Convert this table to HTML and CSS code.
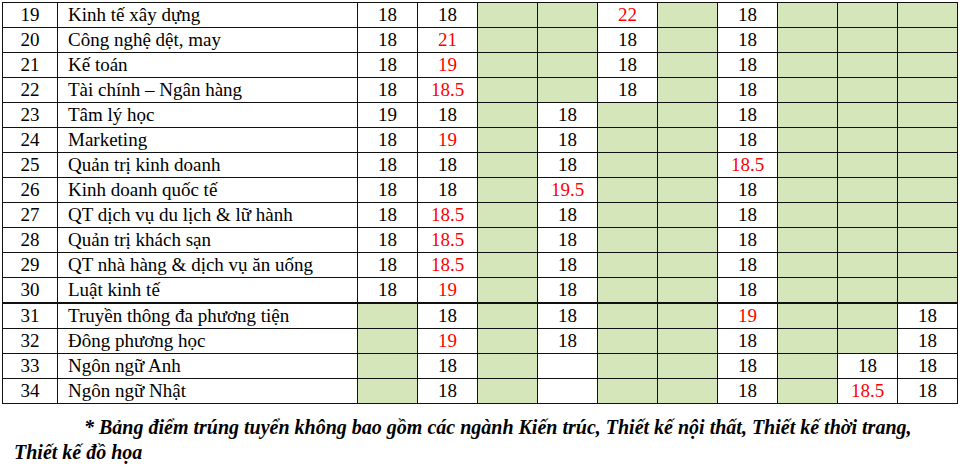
FILE: index.html
```html
<!DOCTYPE html>
<html lang="vi">
<head>
<meta charset="utf-8">
<link rel="stylesheet" href="styles.css">
</head>
<body>
<div class="page">
<table class="scores">
<colgroup>
<col class="c-idx"><col class="c-name">
<col class="c-n"><col class="c-n"><col class="c-n"><col class="c-n"><col class="c-n"><col class="c-n"><col class="c-n"><col class="c-n"><col class="c-n"><col class="c-n">
</colgroup>
<tbody>
<tr><td class="idx">19</td><td class="name">Kinh tế xây dựng</td><td>18</td><td>18</td><td class="g"></td><td class="g"></td><td class="r">22</td><td class="g"></td><td>18</td><td class="g"></td><td class="g"></td><td class="g"></td></tr>
<tr><td class="idx">20</td><td class="name">Công nghệ dệt, may</td><td>18</td><td class="r">21</td><td class="g"></td><td class="g"></td><td>18</td><td class="g"></td><td>18</td><td class="g"></td><td class="g"></td><td class="g"></td></tr>
<tr><td class="idx">21</td><td class="name">Kế toán</td><td>18</td><td class="r">19</td><td class="g"></td><td class="g"></td><td>18</td><td class="g"></td><td>18</td><td class="g"></td><td class="g"></td><td class="g"></td></tr>
<tr><td class="idx">22</td><td class="name">Tài chính – Ngân hàng</td><td>18</td><td class="r">18.5</td><td class="g"></td><td class="g"></td><td>18</td><td class="g"></td><td>18</td><td class="g"></td><td class="g"></td><td class="g"></td></tr>
<tr><td class="idx">23</td><td class="name">Tâm lý học</td><td>19</td><td>18</td><td class="g"></td><td>18</td><td class="g"></td><td class="g"></td><td>18</td><td class="g"></td><td class="g"></td><td class="g"></td></tr>
<tr><td class="idx">24</td><td class="name">Marketing</td><td>18</td><td class="r">19</td><td class="g"></td><td>18</td><td class="g"></td><td class="g"></td><td>18</td><td class="g"></td><td class="g"></td><td class="g"></td></tr>
<tr><td class="idx">25</td><td class="name">Quản trị kinh doanh</td><td>18</td><td>18</td><td class="g"></td><td>18</td><td class="g"></td><td class="g"></td><td class="r">18.5</td><td class="g"></td><td class="g"></td><td class="g"></td></tr>
<tr><td class="idx">26</td><td class="name">Kinh doanh quốc tế</td><td>18</td><td>18</td><td class="g"></td><td class="r">19.5</td><td class="g"></td><td class="g"></td><td>18</td><td class="g"></td><td class="g"></td><td class="g"></td></tr>
<tr><td class="idx">27</td><td class="name">QT dịch vụ du lịch &amp; lữ hành</td><td>18</td><td class="r">18.5</td><td class="g"></td><td>18</td><td class="g"></td><td class="g"></td><td>18</td><td class="g"></td><td class="g"></td><td class="g"></td></tr>
<tr><td class="idx">28</td><td class="name">Quản trị khách sạn</td><td>18</td><td class="r">18.5</td><td class="g"></td><td>18</td><td class="g"></td><td class="g"></td><td>18</td><td class="g"></td><td class="g"></td><td class="g"></td></tr>
<tr><td class="idx">29</td><td class="name">QT nhà hàng &amp; dịch vụ ăn uống</td><td>18</td><td class="r">18.5</td><td class="g"></td><td>18</td><td class="g"></td><td class="g"></td><td>18</td><td class="g"></td><td class="g"></td><td class="g"></td></tr>
<tr class="thick"><td class="idx">30</td><td class="name">Luật kinh tế</td><td>18</td><td class="r">19</td><td class="g"></td><td>18</td><td class="g"></td><td class="g"></td><td>18</td><td class="g"></td><td class="g"></td><td class="g"></td></tr>
<tr><td class="idx">31</td><td class="name">Truyền thông đa phương tiện</td><td class="g"></td><td>18</td><td class="g"></td><td>18</td><td class="g"></td><td class="g"></td><td class="r">19</td><td class="g"></td><td class="g"></td><td>18</td></tr>
<tr><td class="idx">32</td><td class="name">Đông phương học</td><td class="g"></td><td class="r">19</td><td class="g"></td><td>18</td><td class="g"></td><td class="g"></td><td>18</td><td class="g"></td><td class="g"></td><td>18</td></tr>
<tr><td class="idx">33</td><td class="name">Ngôn ngữ Anh</td><td class="g"></td><td>18</td><td class="g"></td><td></td><td class="g"></td><td class="g"></td><td>18</td><td class="g"></td><td>18</td><td>18</td></tr>
<tr><td class="idx">34</td><td class="name">Ngôn ngữ Nhật</td><td class="g"></td><td>18</td><td class="g"></td><td></td><td class="g"></td><td class="g"></td><td>18</td><td class="g"></td><td class="r">18.5</td><td>18</td></tr>
</tbody>
</table>
<p class="note">* Bảng điểm trúng tuyển không bao gồm các ngành Kiến trúc, Thiết kế nội thất, Thiết kế thời trang,<br>Thiết kế đồ họa</p>
</div>
</body>
</html>
```
FILE: styles.css
```css
html, body {
  margin: 0;
  padding: 0;
  background: #fff;
}
body, table, td, p {
  font-family: "Liberation Serif", "DejaVu Serif", serif;
}
.page {
  padding: 2px 0 0 2px;
  color: #000;
}
.scores {
  border-collapse: collapse;
  table-layout: fixed;
  width: 955px;
  font-size: 19px;
}
.c-idx { width: 55px; }
.c-name { width: 300px; }
.c-n { width: 60px; }
.scores td {
  border: 1px solid #111;
  height: 24px;
  padding: 0;
  text-align: center;
  vertical-align: middle;
  line-height: 24px;
  white-space: nowrap;
  overflow: hidden;
}
.scores td.name {
  text-align: left;
  padding-left: 10px;
}
.scores td.g {
  background: #d5e6bb;
}
.scores td.r {
  color: #ff0000;
}
.scores tr.thick td {
  border-bottom-width: 2px;
}
.note {
  margin: 11px 0 0 12px;
  font-size: 20px;
  line-height: 25px;
  font-style: italic;
  font-weight: bold;
  text-indent: 70px;
}
```
